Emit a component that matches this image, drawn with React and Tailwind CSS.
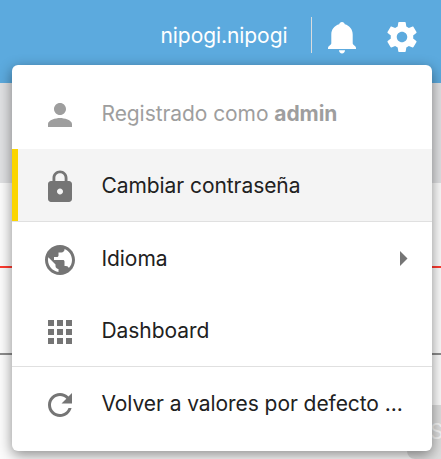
const font = 'font-["Inter",sans-serif]';

function Icon({ d, className = "" }) {
  return (
    <svg viewBox="0 0 24 24" className={`size-9 shrink-0 fill-current ${className}`} aria-hidden="true">
      <path d={d} />
    </svg>
  );
}

function BellIcon({ className = "" }) {
  return (
    <svg viewBox="0 0 36 36" className={`size-9 shrink-0 fill-current ${className}`} aria-hidden="true">
      <path d="M18 3c1.5 0 2.6 1 2.8 2.3C25.500 6.500 28.700 10.400 28.700 15.500V24.500c0 1.300 3.300 2.600 3.300 4.200V30H4V28.700c0-1.600 3.300-2.900 3.300-4.200V15.500C7.300 10.400 10.500 6.500 15.200 5.300 15.400 4 16.500 3 18 3z" />
      <path d="M15 31.300h6c0 1.900-1.300 3.200-3 3.200s-3-1.300-3-3.200z" />
    </svg>
  );
}

const icons = {
  gear: "M19.43 12.98c.04-.32.07-.64.07-.98s-.03-.66-.07-.98l2.11-1.65c.19-.15.24-.42.12-.64l-2-3.46c-.12-.22-.39-.3-.61-.22l-2.49 1c-.52-.4-1.08-.73-1.69-.98l-.38-2.65C14.46 2.18 14.25 2 14 2h-4c-.25 0-.46.18-.49.42l-.38 2.65c-.61.25-1.17.59-1.69.98l-2.49-1c-.23-.09-.49 0-.61.22l-2 3.46c-.13.22-.07.49.12.64l2.11 1.65c-.04.32-.07.65-.07.98s.03.66.07.98l-2.11 1.65c-.19.15-.24.42-.12.64l2 3.46c.12.22.39.3.61.22l2.49-1c.52.4 1.08.73 1.69.98l.38 2.65c.03.24.24.42.49.42h4c.25 0 .46-.18.49-.42l.38-2.65c.61-.25 1.17-.59 1.69-.98l2.49 1c.23.09.49 0 .61-.22l2-3.46c.12-.22.07-.49-.12-.64l-2.11-1.65zM12 15.5c-1.93 0-3.5-1.57-3.5-3.5s1.57-3.5 3.500-3.500 3.500 1.570 3.500 3.500-1.570 3.500-3.500 3.500z",
  person: "M12 12c2.210 0 4-1.790 4-4s-1.790-4-4-4-4 1.790-4 4 1.790 4 4 4zm0 2c-2.670 0-8 1.340-8 4v2h16v-2c0-2.660-5.330-4-8-4z",
  lock: "M18 8h-1V6c0-2.760-2.240-5-5-5S7 3.240 7 6v2H6c-1.100 0-2 .9-2 2v10c0 1.100.9 2 2 2h12c1.100 0 2-.9 2-2V10c0-1.100-.9-2-2-2zm-6 9c-1.100 0-2-.9-2-2s.9-2 2-2 2 .9 2 2-.9 2-2 2zm3.100-9H8.900V6c0-1.710 1.390-3.100 3.100-3.100 1.710 0 3.100 1.390 3.100 3.100v2z",
  globe: "M12 2C6.480 2 2 6.480 2 12s4.480 10 10 10 10-4.480 10-10S17.520 2 12 2zm-1 17.930c-3.950-.49-7-3.850-7-7.930 0-.62.08-1.210.21-1.790L9 15v1c0 1.100.9 2 2 2v1.930zm6.900-2.540c-.26-.81-1-1.390-1.900-1.390h-1v-3c0-.55-.45-1-1-1H8v-2h2c.55 0 1-.45 1-1V7h2c1.100 0 2-.9 2-2v-.41c2.930 1.190 5 4.060 5 7.410 0 2.080-.8 3.970-2.100 5.390z",
  apps: "M4 8h4V4H4v4zm6 12h4v-4h-4v4zm-6 0h4v-4H4v4zm0-6h4v-4H4v4zm6 0h4v-4h-4v4zm6-10v4h4V4h-4zm-6 4h4V4h-4v4zm6 6h4v-4h-4v4zm0 6h4v-4h-4v4z",
  refresh: "M17.650 6.350C16.200 4.900 14.210 4 12 4c-4.420 0-7.990 3.580-7.990 8s3.570 8 7.990 8c3.730 0 6.840-2.550 7.730-6h-2.080c-.82 2.330-3.040 4-5.650 4-3.310 0-6-2.690-6-6s2.690-6 6-6c1.660 0 3.140.69 4.220 1.780L13 11h7V4l-2.350 2.350z",
};

function MenuItem({ icon, children, active, disabled, submenu }) {
  return (
    <div
      className={`flex h-[72px] items-center pr-6 ${active ? "border-l-6 border-[#fbd500] bg-[#f4f4f4] pl-6" : "pl-[30px]"} ${disabled ? "text-[#9e9e9e]" : "text-[#212121]"}`}
    >
      <Icon d={icons[icon]} className={`mt-1 mr-[23.500px] ${disabled ? "" : "text-[#757575]"}`} />
      <span className="pt-0.5 whitespace-nowrap">{children}</span>
      {submenu && (
        <svg viewBox="0 0 8 15" className="ml-auto h-[15px] w-2 fill-[#757575]" aria-hidden="true">
          <path d="M0 0l7.500 7.500L0 15z" />
        </svg>
      )}
    </div>
  );
}

export default function App() {
  return (
    <div className={`relative h-[459px] w-[441px] overflow-hidden bg-[#fcfcfc] ${font} text-[21px] leading-8 tracking-[-0.07px]`}>
      <header className="flex h-[83px] bg-[#5caade] text-white">
        <span className="ml-[160.500px] w-[150.500px] pt-5">nipogi.nipogi</span>
        <span className="mt-[17px] h-9 w-px bg-[#d9dcde]" />
        <BellIcon className="mt-[19px] ml-3" />
        <Icon d={icons.gear} className="mt-[19px] ml-6" />
      </header>
      <div className="h-[100px] bg-[#e0e1e3]" />
      <div className="mt-[83px] h-0.5 bg-[#ff3b30]" />
      <div className="mt-[85px] h-0.5 bg-[#8c8c8c]" />
      <div className="mt-[50px] ml-[407px] h-[54px] w-[100px] rounded-lg bg-[#dedede] pt-[11px] pl-[23px] text-[#f7f7f7]">S</div>

      <div className="absolute top-[65px] left-3 h-[386px] w-[420px] overflow-hidden rounded-md bg-white py-3 shadow-[0_4px_14px_rgba(0,0,0,0.45)]">
        <MenuItem icon="person" disabled>
          Registrado como <b className="font-bold">admin</b>
        </MenuItem>
        <MenuItem icon="lock" active>Cambiar contraseña</MenuItem>
        <div className="h-px bg-[#e0e0e0]" />
        <MenuItem icon="globe" submenu>Idioma</MenuItem>
        <MenuItem icon="apps">Dashboard</MenuItem>
        <div className="h-px bg-[#e0e0e0]" />
        <MenuItem icon="refresh">Volver a valores por defecto ...</MenuItem>
      </div>
    </div>
  );
}
